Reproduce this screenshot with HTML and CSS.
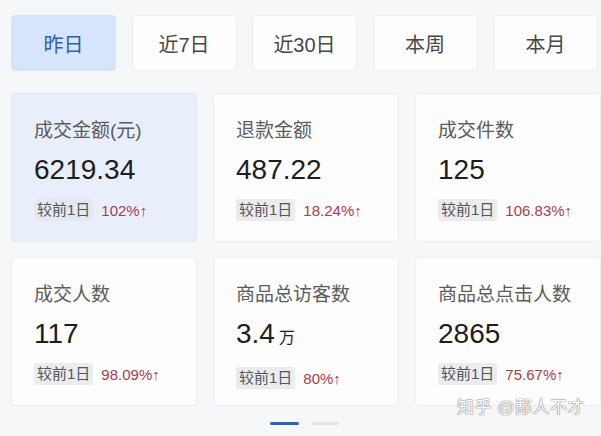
FILE: index.html
```html
<!DOCTYPE html>
<html lang="zh">
<head>
<meta charset="utf-8">
<link rel="stylesheet" href="styles.css">
</head>
<body>
<div class="page">
  <div class="tabs">
    <div class="tab active">昨日</div>
    <div class="tab">近7日</div>
    <div class="tab">近30日</div>
    <div class="tab">本周</div>
    <div class="tab">本月</div>
  </div>
  <div class="cards">
    <div class="card selected">
      <div class="title">成交金额(元)</div>
      <div class="value">6219.34</div>
      <div class="compare"><span class="badge">较前1日</span><span class="pct">102%↑</span></div>
    </div>
    <div class="card">
      <div class="title">退款金额</div>
      <div class="value">487.22</div>
      <div class="compare"><span class="badge">较前1日</span><span class="pct">18.24%↑</span></div>
    </div>
    <div class="card">
      <div class="title">成交件数</div>
      <div class="value">125</div>
      <div class="compare"><span class="badge">较前1日</span><span class="pct">106.83%↑</span></div>
    </div>
    <div class="card">
      <div class="title">成交人数</div>
      <div class="value">117</div>
      <div class="compare"><span class="badge">较前1日</span><span class="pct">98.09%↑</span></div>
    </div>
    <div class="card">
      <div class="title">商品总访客数</div>
      <div class="value">3.4<span class="unit">万</span></div>
      <div class="compare"><span class="badge">较前1日</span><span class="pct">80%↑</span></div>
    </div>
    <div class="card">
      <div class="title">商品总点击人数</div>
      <div class="value">2865</div>
      <div class="compare"><span class="badge">较前1日</span><span class="pct">75.67%↑</span></div>
    </div>
  </div>
  <div class="pager">
    <span class="dot on"></span>
    <span class="dot"></span>
  </div>
  <div class="watermark">知乎 @鄙人不才</div>
</div>
</body>
</html>
```

FILE: styles.css
```css
html, body {
  margin: 0;
  padding: 0;
  background: #f6f7f9;
}
body {
  font-family: "Liberation Sans", "Noto Sans CJK SC", sans-serif;
  width: 601px;
  height: 436px;
  overflow: hidden;
}
.page {
  position: relative;
  width: 601px;
  height: 436px;
  padding: 15px 0 0 11px;
  box-sizing: border-box;
  overflow: hidden;
}
.tabs {
  display: grid;
  grid-template-columns: repeat(5, 105px);
  column-gap: 15.5px;
}
.tab {
  height: 56px;
  box-sizing: border-box;
  display: flex;
  align-items: center;
  justify-content: center;
  font-size: 20px;
  color: #484848;
  background: #fdfdfe;
  border: 1px solid #eceef1;
  border-radius: 4px;
}
.tab.active {
  background: #d6e5fb;
  border-color: #d6e5fb;
  color: #2f60ad;
}
.cards {
  margin-top: 22px;
  display: grid;
  grid-template-columns: repeat(3, 186px);
  column-gap: 16px;
  row-gap: 15px;
}
.card {
  height: 149px;
  box-sizing: border-box;
  padding: 26px 0 0 22px;
  background: #fdfdfe;
  border: 1px solid #eceef2;
  border-radius: 4px;
}
.card.selected {
  background: #e9effa;
  border-color: #e2e9f6;
}
.title {
  font-size: 19px;
  line-height: 22px;
  color: #5c5c5c;
  white-space: nowrap;
}
.value {
  margin-top: 12px;
  font-size: 28px;
  line-height: 32px;
  color: #1e1e1e;
}
.unit {
  font-size: 16px;
  margin-left: 4px;
}
.compare {
  margin-top: 13px;
  display: flex;
  align-items: center;
  gap: 8px;
}
.badge {
  height: 22px;
  line-height: 22px;
  padding: 0 3px;
  font-size: 15px;
  color: #555;
  background: #ebecef;
  border-radius: 2px;
}
.selected .badge {
  background: #e3e8f1;
}
.pct {
  font-size: 15px;
  color: #ac3a4d;
}
.pager {
  margin-top: 16px;
  display: flex;
  justify-content: center;
  gap: 12px;
  padding-left: 8px;
  margin-left: -11px;
}
.dot {
  width: 28px;
  height: 3px;
  border-radius: 2px;
  background: #e2e4e8;
}
.dot.on {
  width: 29px;
  background: #2b64c8;
}
.watermark {
  position: absolute;
  left: 457px;
  top: 398px;
  font-size: 17px;
  line-height: 20px;
  color: #ffffff;
  letter-spacing: 0.5px;
  text-shadow: 0 0 1px #888, 0 0 1px #888, 0 0 1px #999;
  white-space: nowrap;
}
```
